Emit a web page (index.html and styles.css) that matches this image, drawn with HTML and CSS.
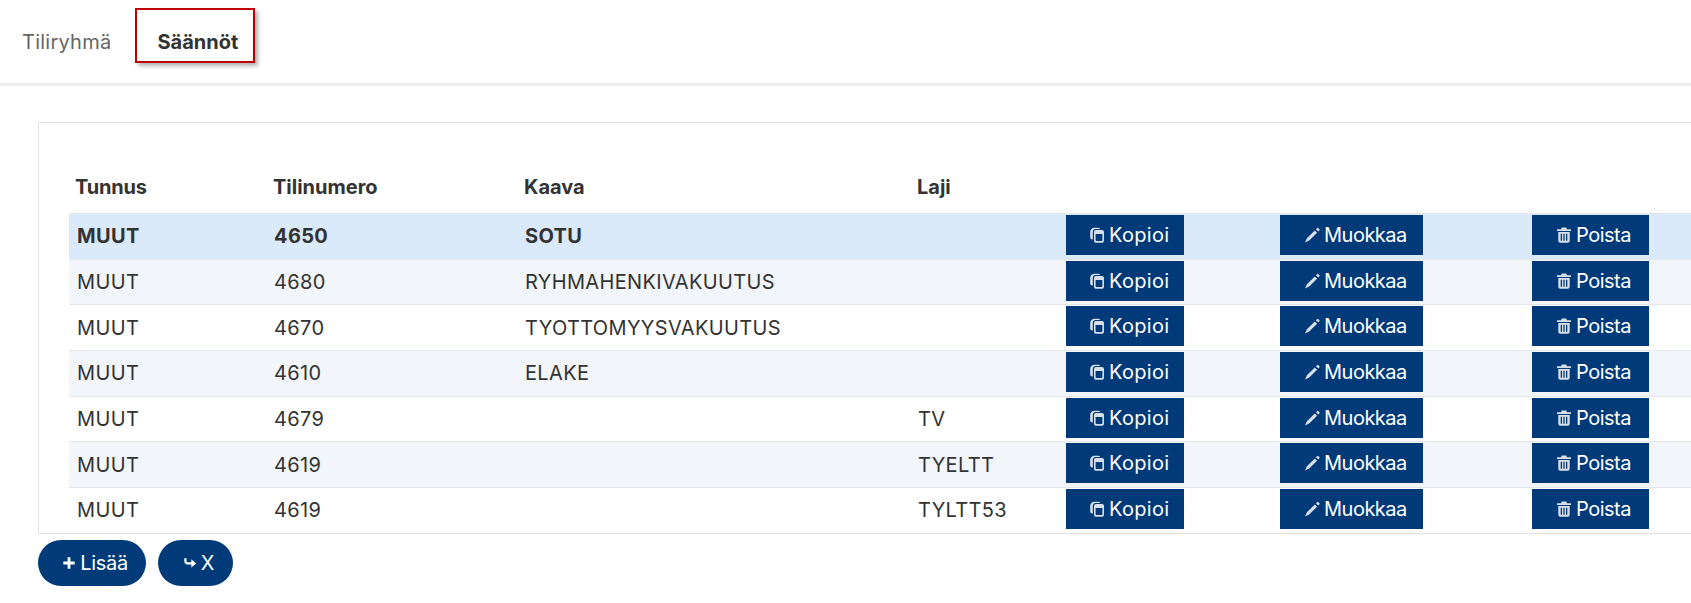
FILE: index.html
```html
<!DOCTYPE html>
<html lang="fi">
  <head>
    <meta charset="UTF-8" />
    <title>Säännöt</title>
    <link rel="stylesheet" href="styles.css">
  </head>
  <body>
    <svg class="defs" width="0" height="0">
      <symbol id="i-copy" viewBox="0 0 16 16">
        <path d="M5.500 0.800h4a2 2 0 0 1 1.700 1.200H6.800A3 3 0 0 0 3.800 5v7.400A2 2 0 0 1 1.200 10.500V5A4.200 4.200 0 0 1 5.500 0.800z" />
        <path fill-rule="evenodd" d="M7 3h6a2 2 0 0 1 2 2v8.200a2.600 2.600 0 0 1-2.600 2.600H7.600A2.600 2.600 0 0 1 5 13.200V5a2 2 0 0 1 2-2zM6.600 7v6a1 1 0 0 0 1 1h4.800a1 1 0 0 0 1-1V7z" />
      </symbol>
      <symbol id="i-pencil" viewBox="0 0 16 16">
        <path d="M10.800 3.400l2.300 2.300-7.900 7.900L1 15.500l1.900-4.200zM11.900 2.300l1.100-1.100a1 1 0 0 1 1.400 0l.9.900a1 1 0 0 1 0 1.400l-1.100 1.100z" />
      </symbol>
      <symbol id="i-trash" viewBox="0 0 16 16">
        <path fill-rule="evenodd" d="M5.800 0.500h4.400l.8 1.700h4V4H1V2.200h4zM2.300 5h11.400v8.700a2 2 0 0 1-2 2H4.300a2 2 0 0 1-2-2zM4.700 6.800v7h1.300v-7zM7.350 6.800v7h1.300v-7zM10 6.800v7h1.300v-7z" />
      </symbol>
      <symbol id="i-plus" viewBox="0 0 16 16">
        <path d="M6.400 1.500h3.200v4.900h4.900v3.200H9.600v4.900H6.400V9.600H1.500V6.400h4.900z" />
      </symbol>
      <symbol id="i-share" viewBox="0 0 16 16">
        <path d="M1.500 2.500H4v2.800c0 1.200.7 1.900 1.900 1.900H9.500V3.800L15 8.500l-5.500 4.700V9.700H5.300C2.900 9.700 1.500 8.200 1.500 5.800z" />
      </symbol>
    </svg>

    <nav class="tabs">
      <a class="tab">Tiliryhmä</a>
      <a class="tab tab-active">Säännöt</a>
    </nav>

    <section class="panel">
      <table class="rules">
        <colgroup>
          <col class="col-id" />
          <col class="col-account" />
          <col class="col-formula" />
          <col class="col-type" />
          <col class="col-copy" />
          <col class="col-edit" />
          <col class="col-delete" />
        </colgroup>
        <thead>
          <tr>
            <th>Tunnus</th>
            <th>Tilinumero</th>
            <th>Kaava</th>
            <th>Laji</th>
            <th></th>
            <th></th>
            <th></th>
          </tr>
        </thead>
        <tbody>
          <tr class="selected">
            <td>MUUT</td>
            <td>4650</td>
            <td>SOTU</td>
            <td></td>
            <td class="cell-btn"><button class="btn btn-copy"><svg class="icon"><use href="#i-copy" /></svg>Kopioi</button></td>
            <td class="cell-btn"><button class="btn btn-edit"><svg class="icon"><use href="#i-pencil" /></svg>Muokkaa</button></td>
            <td class="cell-btn"><button class="btn btn-delete"><svg class="icon"><use href="#i-trash" /></svg>Poista</button></td>
          </tr>
          <tr>
            <td>MUUT</td>
            <td>4680</td>
            <td>RYHMAHENKIVAKUUTUS</td>
            <td></td>
            <td class="cell-btn"><button class="btn btn-copy"><svg class="icon"><use href="#i-copy" /></svg>Kopioi</button></td>
            <td class="cell-btn"><button class="btn btn-edit"><svg class="icon"><use href="#i-pencil" /></svg>Muokkaa</button></td>
            <td class="cell-btn"><button class="btn btn-delete"><svg class="icon"><use href="#i-trash" /></svg>Poista</button></td>
          </tr>
          <tr>
            <td>MUUT</td>
            <td>4670</td>
            <td>TYOTTOMYYSVAKUUTUS</td>
            <td></td>
            <td class="cell-btn"><button class="btn btn-copy"><svg class="icon"><use href="#i-copy" /></svg>Kopioi</button></td>
            <td class="cell-btn"><button class="btn btn-edit"><svg class="icon"><use href="#i-pencil" /></svg>Muokkaa</button></td>
            <td class="cell-btn"><button class="btn btn-delete"><svg class="icon"><use href="#i-trash" /></svg>Poista</button></td>
          </tr>
          <tr>
            <td>MUUT</td>
            <td>4610</td>
            <td>ELAKE</td>
            <td></td>
            <td class="cell-btn"><button class="btn btn-copy"><svg class="icon"><use href="#i-copy" /></svg>Kopioi</button></td>
            <td class="cell-btn"><button class="btn btn-edit"><svg class="icon"><use href="#i-pencil" /></svg>Muokkaa</button></td>
            <td class="cell-btn"><button class="btn btn-delete"><svg class="icon"><use href="#i-trash" /></svg>Poista</button></td>
          </tr>
          <tr>
            <td>MUUT</td>
            <td>4679</td>
            <td></td>
            <td>TV</td>
            <td class="cell-btn"><button class="btn btn-copy"><svg class="icon"><use href="#i-copy" /></svg>Kopioi</button></td>
            <td class="cell-btn"><button class="btn btn-edit"><svg class="icon"><use href="#i-pencil" /></svg>Muokkaa</button></td>
            <td class="cell-btn"><button class="btn btn-delete"><svg class="icon"><use href="#i-trash" /></svg>Poista</button></td>
          </tr>
          <tr>
            <td>MUUT</td>
            <td>4619</td>
            <td></td>
            <td>TYELTT</td>
            <td class="cell-btn"><button class="btn btn-copy"><svg class="icon"><use href="#i-copy" /></svg>Kopioi</button></td>
            <td class="cell-btn"><button class="btn btn-edit"><svg class="icon"><use href="#i-pencil" /></svg>Muokkaa</button></td>
            <td class="cell-btn"><button class="btn btn-delete"><svg class="icon"><use href="#i-trash" /></svg>Poista</button></td>
          </tr>
          <tr>
            <td>MUUT</td>
            <td>4619</td>
            <td></td>
            <td>TYLTT53</td>
            <td class="cell-btn"><button class="btn btn-copy"><svg class="icon"><use href="#i-copy" /></svg>Kopioi</button></td>
            <td class="cell-btn"><button class="btn btn-edit"><svg class="icon"><use href="#i-pencil" /></svg>Muokkaa</button></td>
            <td class="cell-btn"><button class="btn btn-delete"><svg class="icon"><use href="#i-trash" /></svg>Poista</button></td>
          </tr>
        </tbody>
      </table>
    </section>

    <div class="actions">
      <button class="btn btn-round btn-add"><svg class="icon"><use href="#i-plus" /></svg>Lisää</button>
      <button class="btn btn-round btn-close"><svg class="icon"><use href="#i-share" /></svg>X</button>
    </div>
  </body>
</html>
```

FILE: styles.css
```css
body {
  margin: 0;
  font-family: Inter, "Liberation Sans", sans-serif;
  font-size: 20px;
  letter-spacing: 0.35px;
  color: #333;
  background-color: #fff;
}

.defs {
  position: absolute;
}

.tabs {
  display: flex;
  align-items: flex-start;
  height: 75px;
  padding-top: 8px;
  padding-left: 22px;
  border-bottom: 3px solid #eee;
}

.tab {
  display: flex;
  align-items: center;
  height: 55px;
  padding-top: 12px;
  box-sizing: border-box;
  letter-spacing: 0.25px;
  color: #666;
}

.tab-active {
  margin-left: 24px;
  width: 120px;
  padding: 12px 0 0 20px;
  font-weight: 700;
  letter-spacing: 0;
  color: #333;
  border: 2px solid #c00000;
  box-shadow: 3px 3px 4px rgba(0, 0, 0, 0.3);
}

.panel {
  margin: 36px 0 0 38px;
  padding: 39px 0 0 30px;
  border: 1px solid #e2e2e2;
  border-right: none;
}

.rules {
  width: 1622px;
  table-layout: fixed;
  border-collapse: collapse;
}

.col-id { width: 197px; }
.col-account { width: 251px; }
.col-formula { width: 393px; }
.col-type { width: 148px; }
.col-copy { width: 214px; }
.col-edit { width: 252px; }
.col-delete { width: 167px; }

.rules th {
  height: 50px;
  padding: 0 7px 1px;
  text-align: left;
  font-weight: 700;
  letter-spacing: 0;
}

.rules th:first-child {
  padding-left: 6px;
  letter-spacing: -0.2px;
}

.rules td {
  height: 44.7px;
  padding: 0 8px;
  border-top: 1px solid #e3e6ea;
}

.rules td.cell-btn {
  height: 43.7px;
  padding-top: 1px;
  vertical-align: top;
}

.rules tbody tr:nth-child(even) {
  background-color: #f2f5f9;
}

.rules tr.selected {
  background-color: #dbeafb;
  font-weight: 700;
}

.btn {
  display: flex;
  align-items: center;
  height: 40px;
  padding: 0;
  border: none;
  background-color: #003a78;
  color: #fff;
  font-family: inherit;
  font-size: 20px;
  font-weight: 400;
  letter-spacing: 0;
}

.btn-copy {
  width: 118px;
  padding-left: 23px;
  letter-spacing: 0.3px;
}

.btn-edit {
  width: 143px;
  padding-left: 24px;
  letter-spacing: -0.5px;
}

.btn-delete {
  width: 117px;
  padding-left: 24px;
  letter-spacing: -0.5px;
}

.icon {
  width: 16px;
  height: 16px;
  margin-right: 4px;
  fill: #d8dfe8;
}

.actions {
  display: flex;
  gap: 12px;
  margin: 6px 0 0 38px;
}

.btn-round {
  justify-content: center;
  height: 46px;
  border-radius: 23px;
}

.btn-round .icon {
  width: 14px;
  height: 14px;
  fill: #fff;
}

.btn-add {
  width: 108px;
  padding-left: 6px;
  letter-spacing: -0.3px;
}

.btn-close {
  width: 75px;
  padding-left: 6px;
}
```
